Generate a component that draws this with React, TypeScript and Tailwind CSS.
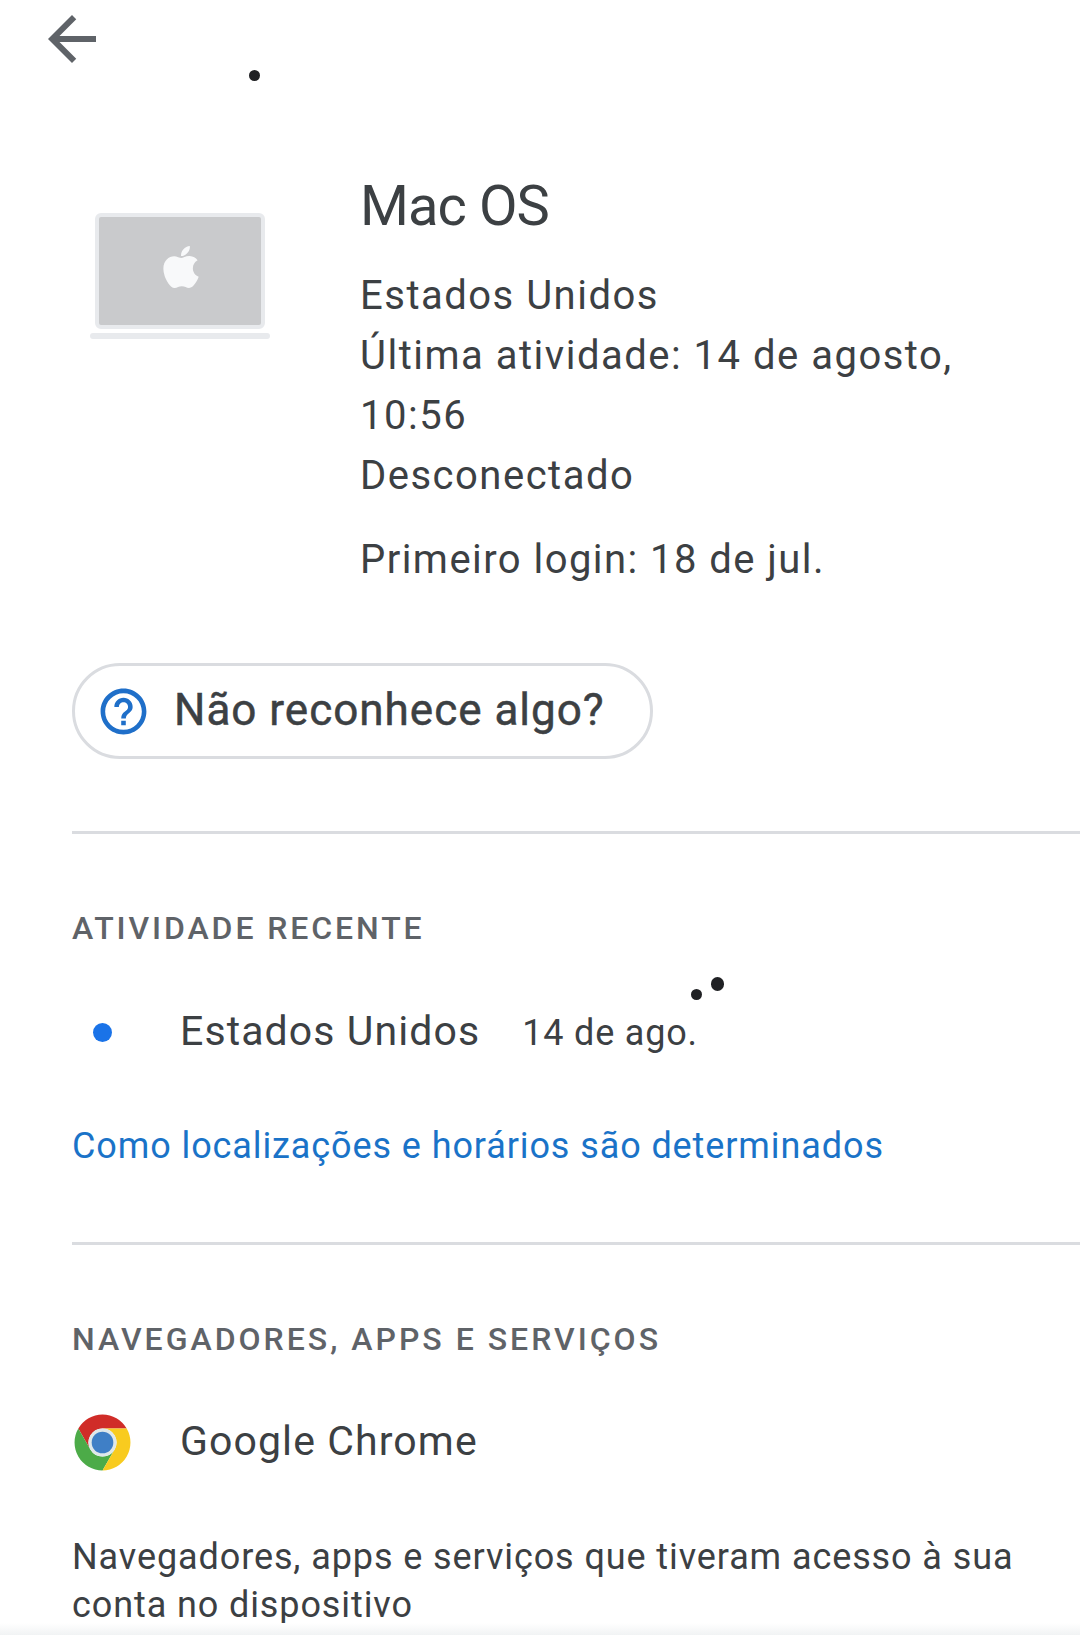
import { FaApple } from 'react-icons/fa';
import { MdArrowBack, MdHelpOutline } from 'react-icons/md';

function Laptop() {
  return (
    <svg width="190" height="140" viewBox="0 0 190 140">
      <rect x="7" y="3" width="166" height="112" rx="4" fill="#c9cacc" stroke="#e8eaed" strokeWidth="4" />
      <rect x="0" y="121" width="180" height="6" rx="3" fill="#e8eaed" />
      <FaApple x="67" y="31" size={48} color="#f8f9fa" />
    </svg>
  );
}

function ChromeLogo() {
  return (
    <svg width="61" height="61" viewBox="0 0 48 48">
      <path d="M4.95 13A22 22 0 0 1 43.05 13H24A11 11 0 0 0 14.47 29.5Z" fill="#d02c28" />
      <path d="M4.95 13A22 22 0 0 0 24 46L33.53 29.5A11 11 0 0 1 14.47 29.5Z" fill="#4cab48" />
      <path d="M43.05 13A22 22 0 0 1 24 46L33.53 29.5A11 11 0 0 0 24 13Z" fill="#f8cb1f" />
      <circle cx="24" cy="24" r="11" fill="#dfe8ea" />
      <circle cx="24" cy="24" r="8.5" fill="#3f7fc6" />
    </svg>
  );
}

function Divider() {
  return <div className="ml-[72px] h-[3px] bg-[#dadce0]" />;
}

export default function App() {
  return (
    <div className="relative h-[1635px] w-[1080px] overflow-hidden bg-white font-['Roboto',sans-serif] text-[#3c4043]">
      <div className="pl-9 pt-[3px]">
        <MdArrowBack size={72} color="#5f6368" />
      </div>

      {/* stray dots in the screenshot */}
      <div className="absolute left-[249px] top-[70px] h-[11px] w-[11px] rounded-full bg-[#202124]" />
      <div className="absolute left-[691px] top-[989px] h-[11px] w-[11px] rounded-full bg-[#202124]" />
      <div className="absolute left-[711px] top-[977px] h-[14px] w-[13px] rounded-full bg-[#202124]" />

      <div className="mt-[101px] flex">
        <div className="w-[360px] shrink-0 pl-[90px] pt-[36px]">
          <Laptop />
        </div>
        <div>
          <h1 className="text-[56px] leading-[60px] tracking-[-0.9px]">Mac OS</h1>
          <div className="mt-[30px] text-[40px] leading-[60px] tracking-[1.5px]">
            <p>Estados Unidos</p>
            <p>Última atividade: 14 de agosto,</p>
            <p>10:56</p>
            <p>Desconectado</p>
          </div>
          <p className="mt-6 text-[40px] leading-[60px] tracking-[1.45px]">Primeiro login: 18 de jul.</p>
        </div>
      </div>

      <div className="ml-[72px] mt-[73px] flex h-[96px] w-[581px] items-center rounded-full border-[3px] border-[#dadce0] pl-[21px]">
        <MdHelpOutline size={55} color="#1f6fc9" />
        <span className="-mt-[2px] ml-[23px] text-[44px] tracking-[1px] [-webkit-text-stroke:0.5px_#3c4043]">Não reconhece algo?</span>
      </div>

      <div className="mt-[72px]">
        <Divider />
      </div>

      <section className="pl-[72px] pt-[72px]">
        <h2 className="text-[32px] font-medium leading-[44px] tracking-[2.9px] text-[#5f6368]">ATIVIDADE RECENTE</h2>
        <div className="mt-[52px] flex h-[60px] items-center">
          <div className="ml-[21px] h-[19px] w-[19px] rounded-full bg-[#1a73e8]" />
          <span className="ml-[68px] text-[41px] tracking-[1.1px]">Estados Unidos</span>
          <span className="ml-[42px] mt-[2px] text-[36px] tracking-[0.8px]">14 de ago.</span>
        </div>
        <p className="mt-[54px] text-[36px] leading-[60px] tracking-[0.9px] text-[#1a73c8]">
          Como localizações e horários são determinados
        </p>
      </section>

      <div className="mt-[66px]">
        <Divider />
      </div>

      <section className="pl-[72px] pr-4 pt-[72px]">
        <h2 className="text-[32px] font-medium leading-[44px] tracking-[3px] text-[#5f6368]">NAVEGADORES, APPS E SERVIÇOS</h2>
        <div className="mt-[51px] flex h-[60px] items-center">
          <ChromeLogo />
          <span className="ml-[47px] text-[41px] tracking-[1.1px]">Google Chrome</span>
        </div>
        <p className="mt-[61px] text-[36px] leading-[48px] tracking-[0.9px]">
          Navegadores, apps e serviços que tiveram acesso à sua conta no dispositivo
        </p>
      </section>

      <div className="absolute inset-x-0 bottom-0 h-[12px] bg-gradient-to-b from-white to-[#f1f3f4]" />
    </div>
  );
}
